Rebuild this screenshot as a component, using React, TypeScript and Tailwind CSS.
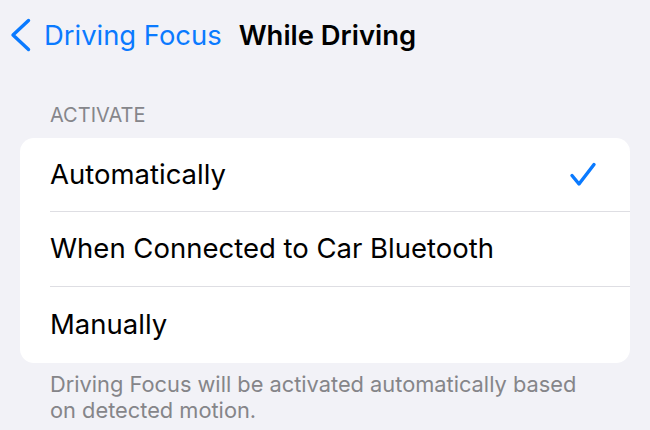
import React from "react";

export default function App() {
  const font = { fontFamily: '"Inter", "Liberation Sans", sans-serif' };
  return (
    <div className="w-[650px] h-[430px] overflow-hidden bg-[#f2f2f7]" style={font}>
      <div className="flex items-center h-[70px] pl-[10px]">
        <svg width="22" height="34" viewBox="0 0 22 34" className="shrink-0">
          <path d="M18.5 2.5 L3 17 L18.5 31.5" fill="none" stroke="#0a7aff" strokeWidth="3.4" strokeLinecap="round" strokeLinejoin="round" />
        </svg>
        <span className="ml-[12px] text-[27.4px] leading-[34px] text-[#0a7aff]">Driving Focus</span>
        <span className="ml-[17px] text-[27.4px] leading-[34px] font-semibold text-black">While Driving</span>
      </div>
      <div className="px-[20px]">
        <div className="mt-[33px] mb-[11px] h-[24px] pl-[30px] text-[20px] leading-[24px] text-[#86868b] uppercase">
          Activate
        </div>
        <div className="bg-white rounded-[14px] overflow-hidden">
          <div className="pl-[30px]">
            <div className="flex items-center justify-between h-[74px] border-b border-[#dedee3] pr-[33px]">
              <span className="text-[27.5px] text-black">Automatically</span>
              <svg width="28" height="26" viewBox="0 0 28 26">
                <path d="M3 13.5 L10 22 L25 2.5" fill="none" stroke="#0a7aff" strokeWidth="3.4" strokeLinecap="round" strokeLinejoin="round" />
              </svg>
            </div>
          </div>
          <div className="pl-[30px]">
            <div className="flex items-center h-[75px] border-b border-[#dedee3]">
              <span className="text-[27.5px] text-black">When Connected to Car Bluetooth</span>
            </div>
          </div>
          <div className="pl-[30px]">
            <div className="flex items-center h-[76px]">
              <span className="text-[27.5px] text-black">Manually</span>
            </div>
          </div>
        </div>
        <div className="mt-[8px] pl-[30px] pr-[30px] text-[21.8px] leading-[26px] text-[#858589]">
          Driving Focus will be activated automatically based on detected motion.
        </div>
      </div>
    </div>
  );
}
